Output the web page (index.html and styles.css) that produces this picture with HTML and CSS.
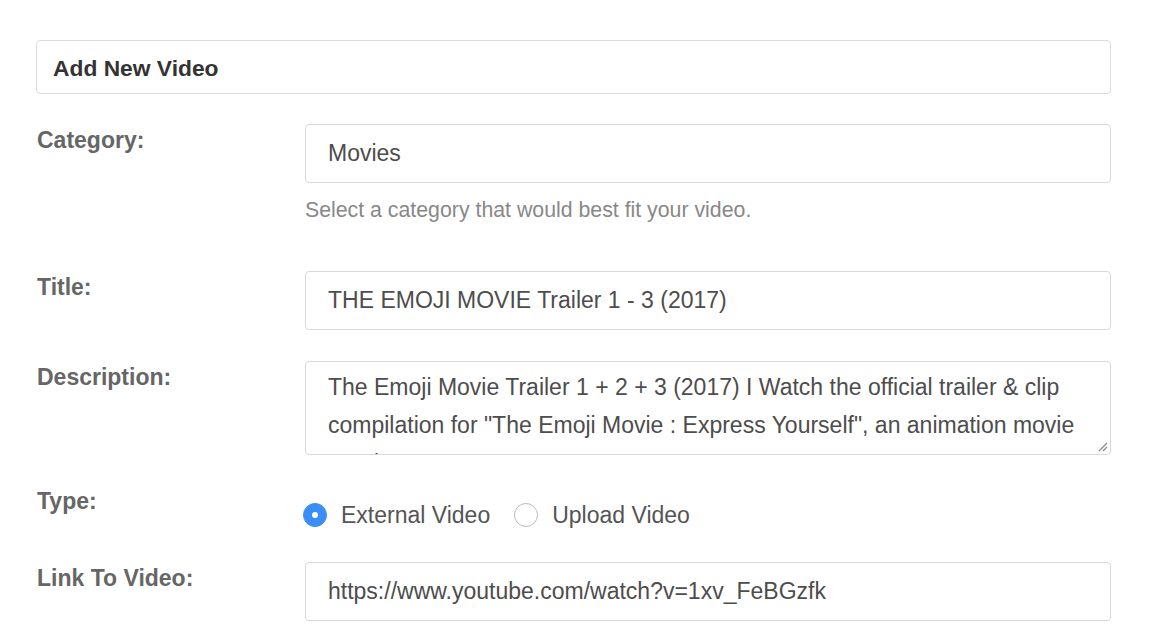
FILE: index.html
```html
<!DOCTYPE html>
<html>
<head>
<meta charset="utf-8">
<link rel="stylesheet" href="styles.css">
</head>
<body>
<div class="page">
  <div class="panel-head">Add New Video</div>

  <div class="row row-category">
    <div class="label">Category:</div>
    <div class="field">
      <div class="control">Movies</div>
      <div class="help">Select a category that would best fit your video.</div>
    </div>
  </div>

  <div class="row row-title">
    <div class="label">Title:</div>
    <div class="field">
      <div class="control">THE EMOJI MOVIE Trailer 1 - 3 (2017)</div>
    </div>
  </div>

  <div class="row row-desc">
    <div class="label">Description:</div>
    <div class="field">
      <div class="control textarea">
        <div class="ta-text">The Emoji Movie Trailer 1 + 2 + 3 (2017) I Watch the official trailer &amp; clip compilation for "The Emoji Movie : Express Yourself", an animation movie starring</div>
        <svg class="grip" width="12" height="12" viewBox="0 0 12 12"><path d="M11 3 L3 11 M11 7 L7 11" stroke="#888" stroke-width="1.2" fill="none"/></svg>
      </div>
    </div>
  </div>

  <div class="row row-type">
    <div class="label">Type:</div>
    <div class="field radios">
      <label class="radio"><span class="dot checked"></span><span class="rtext">External Video</span></label>
      <label class="radio"><span class="dot"></span><span class="rtext">Upload Video</span></label>
    </div>
  </div>

  <div class="row row-link">
    <div class="label">Link To Video:</div>
    <div class="field">
      <div class="control">https://www.youtube.com/watch?v=1xv_FeBGzfk</div>
    </div>
  </div>
</div>
</body>
</html>
```

FILE: styles.css
```css
html, body {
  margin: 0;
  padding: 0;
  background: #fff;
}
body {
  font-family: "Liberation Sans", Arial, Helvetica, sans-serif;
  color: #555;
}
.page {
  width: 1075px;
  margin-left: 36px;
  padding-top: 40px;
}
.panel-head {
  border: 1px solid #dcdcdc;
  border-radius: 4px;
  padding-left: 16px;
  padding-top: 3px;
  box-sizing: content-box;
  height: 49px;
  display: flex;
  align-items: center;
  font-weight: bold;
  font-size: 22.8px;
  color: #333;
}
.row {
  display: grid;
  grid-template-columns: 269px 1fr;
}
.label {
  font-weight: bold;
  font-size: 23px;
  color: #666;
  padding-left: 1px;
  line-height: 26px;
  padding-top: 3px;
}
.control {
  height: 57px;
  border: 1px solid #d9d9d9;
  border-radius: 4px;
  box-sizing: content-box;
  padding-left: 22px;
  display: flex;
  align-items: center;
  font-size: 23px;
  color: #4d4d4d;
}
.help {
  margin-top: 15px;
  font-size: 21.3px;
  line-height: 24px;
  color: #888;
}
.row-category { margin-top: 30px; }
.row-title { margin-top: 49px; }
.row-desc { margin-top: 31px; }
.row-type { margin-top: 30px; }
.row-link { margin-top: 34px; }

.textarea {
  height: 92px;
  display: block;
  position: relative;
  overflow: hidden;
  padding-right: 22px;
}
.ta-text {
  line-height: 38px;
  padding-top: 6px;
}
.grip {
  position: absolute;
  right: 2px;
  bottom: 2px;
}
.radios {
  display: flex;
  align-items: center;
  padding-top: 17px;
  margin-left: -2px;
}
.radio {
  display: flex;
  align-items: center;
  font-size: 23px;
  line-height: 26px;
  color: #555;
  margin-right: 24px;
}
.dot {
  width: 22px;
  height: 22px;
  border: 1px solid #bbb;
  border-radius: 50%;
  box-sizing: content-box;
  background: #fff;
  margin-right: 14px;
  position: relative;
}
.dot.checked {
  background: #3a8ef6;
  border-color: #3a8ef6;
}
.dot.checked::after {
  content: "";
  position: absolute;
  left: 8px;
  top: 8px;
  width: 6px;
  height: 6px;
  border-radius: 50%;
  background: #fff;
}
```
